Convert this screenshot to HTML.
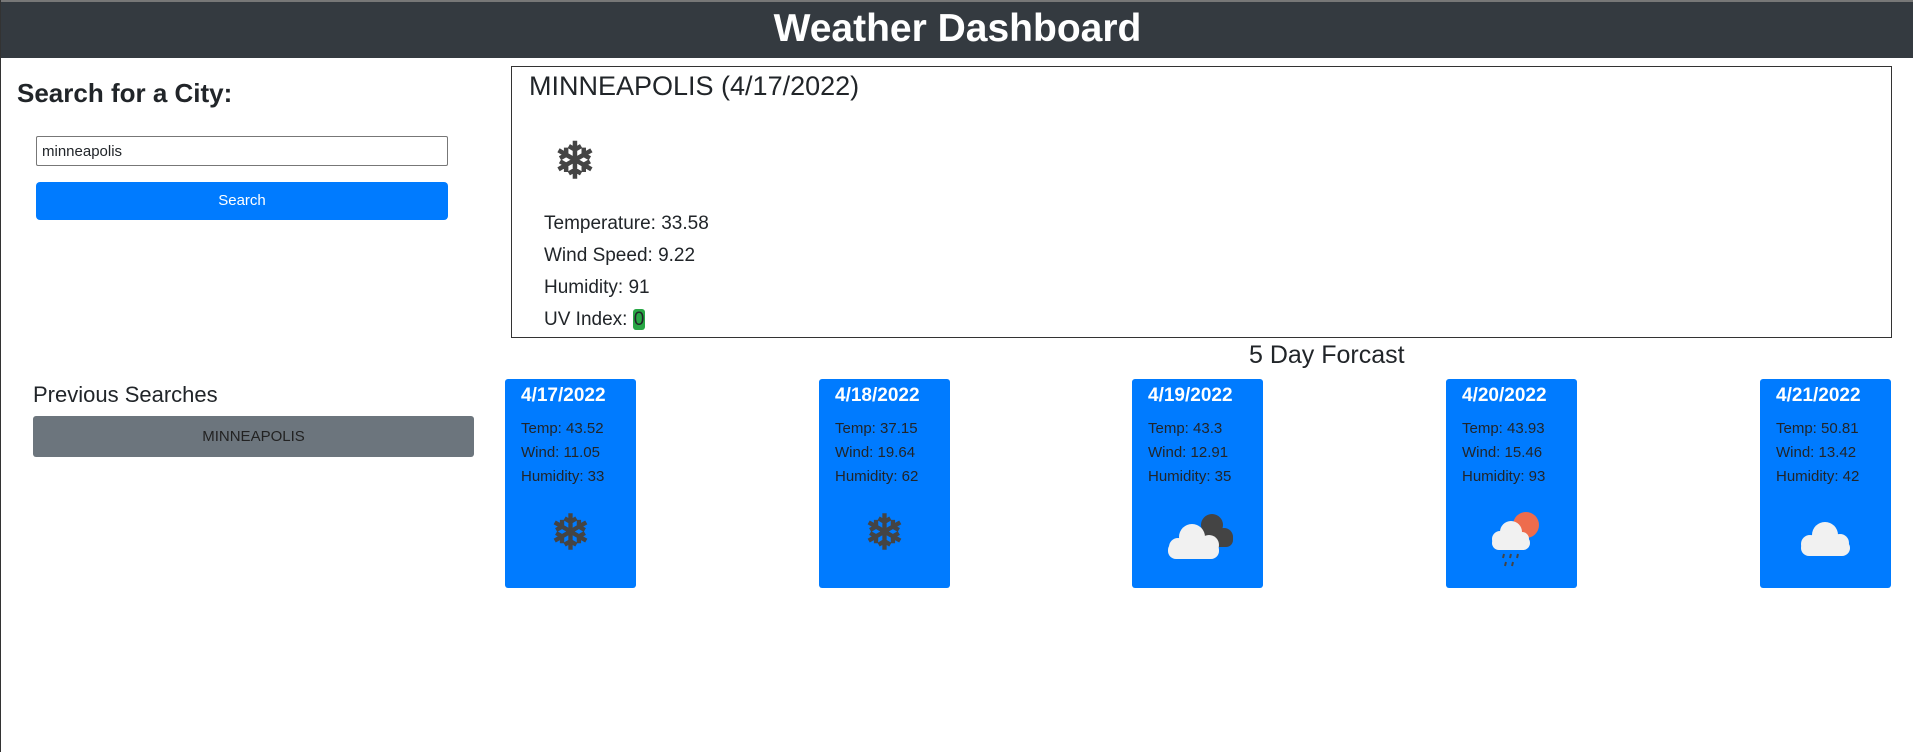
<!DOCTYPE html>
<html><head><style>
*{box-sizing:border-box;margin:0;padding:0}
body{width:1913px;height:752px;background:#fff;font-family:"Liberation Sans",sans-serif;color:#212529;position:relative;overflow:hidden;border-left:1px solid #333}
.hdr{position:absolute;left:0;top:0;width:1913px;height:58px;background:#343a40;border-top:2px solid #777;color:#fff;text-align:center;font-size:39px;font-weight:bold;line-height:54px}
.abs{position:absolute}
.card{position:absolute;top:379px;width:131px;height:209px;background:#007bff;border-radius:3px;padding:0 16px}
.card h3{color:#fff;font-size:19px;margin-top:4px;line-height:26px}
.card p{font-size:15px;line-height:24px;color:#212529}
.card .p1{margin-top:8px}
.ic{position:absolute;left:0;width:131px;top:126px;text-align:center}
</style></head><body>
<div class="hdr">Weather Dashboard</div>
<div class="abs" style="left:16px;top:78px;font-size:26px;font-weight:bold">Search for a City:</div>
<div class="abs" style="left:35px;top:136px;width:412px;height:30px;border:1px solid #777;border-radius:2px;font-size:15px;padding:6px 5px">minneapolis</div>
<div class="abs" style="left:35px;top:182px;width:412px;height:38px;background:#007bff;border-radius:4px;color:#fff;font-size:15px;text-align:center;line-height:38px">Search</div>
<div class="abs" style="left:510px;top:66px;width:1381px;height:272px;border:1px solid #333"></div>
<div class="abs" style="left:528px;top:71px;font-size:27px">MINNEAPOLIS (4/17/2022)</div>
<div class="abs" style="left:553px;top:134px;font-size:50px;color:#444;line-height:54px;font-weight:bold">❄</div>
<div class="abs" style="left:543px;top:208px;font-size:19px;line-height:32px">Temperature: 33.58<br>Wind Speed: 9.22<br>Humidity: 91<br>UV Index: <span style="background:#28a745;border-radius:3px;padding:0 1px">0</span></div>
<div class="abs" style="left:1248px;top:341px;font-size:25px">5 Day Forcast</div>
<div class="abs" style="left:32px;top:382px;font-size:22px">Previous Searches</div>
<div class="abs" style="left:32px;top:416px;width:441px;height:41px;background:#6c757d;border-radius:3px;color:#222;font-size:15px;text-align:center;line-height:41px">MINNEAPOLIS</div>

<div class="card" style="left:504px"><h3>4/17/2022</h3><p class="p1">Temp: 43.52</p><p>Wind: 11.05</p><p>Humidity: 33</p><div class="ic" style="font-size:48px;color:#444;font-weight:bold">❄</div></div>
<div class="card" style="left:818px"><h3>4/18/2022</h3><p class="p1">Temp: 37.15</p><p>Wind: 19.64</p><p>Humidity: 62</p><div class="ic" style="font-size:48px;color:#444;font-weight:bold">❄</div></div>
<div class="card" style="left:1131px"><h3>4/19/2022</h3><p class="p1">Temp: 43.3</p><p>Wind: 12.91</p><p>Humidity: 35</p>
<svg class="ic" style="top:130px" height="60" viewBox="0 0 131 60"><g fill="#444"><circle cx="80" cy="16" r="11"/><circle cx="92" cy="28" r="9"/><rect x="70" y="22" width="31" height="16" rx="7"/></g><g fill="#f1f1f1"><circle cx="60" cy="28" r="13"/><circle cx="77" cy="36" r="10"/><circle cx="46" cy="38" r="9"/><rect x="36" y="33" width="51" height="17" rx="8"/></g></svg></div>
<div class="card" style="left:1445px"><h3>4/20/2022</h3><p class="p1">Temp: 43.93</p><p>Wind: 15.46</p><p>Humidity: 93</p>
<svg class="ic" style="top:126px" height="66" viewBox="0 0 131 66"><circle cx="80" cy="20" r="13" fill="#ee6c4d"/><g fill="#f1f1f1"><circle cx="65" cy="27" r="11"/><circle cx="54" cy="34" r="8"/><circle cx="76" cy="34" r="7"/><rect x="46" y="31" width="38" height="14" rx="7"/></g><g stroke="#444" stroke-width="2"><line x1="58" y1="49" x2="57" y2="53"/><line x1="65" y1="49" x2="64" y2="53"/><line x1="72" y1="49" x2="71" y2="53"/><line x1="60" y1="57" x2="59" y2="61"/><line x1="67" y1="57" x2="66" y2="61"/></g></svg></div>
<div class="card" style="left:1759px"><h3>4/21/2022</h3><p class="p1">Temp: 50.81</p><p>Wind: 13.42</p><p>Humidity: 42</p>
<svg class="ic" style="top:130px" height="60" viewBox="0 0 131 60"><g fill="#f1f1f1"><circle cx="65" cy="26" r="13"/><circle cx="80" cy="34" r="9"/><circle cx="50" cy="35" r="9"/><rect x="41" y="31" width="49" height="16" rx="8"/></g></svg></div>
</body></html>
